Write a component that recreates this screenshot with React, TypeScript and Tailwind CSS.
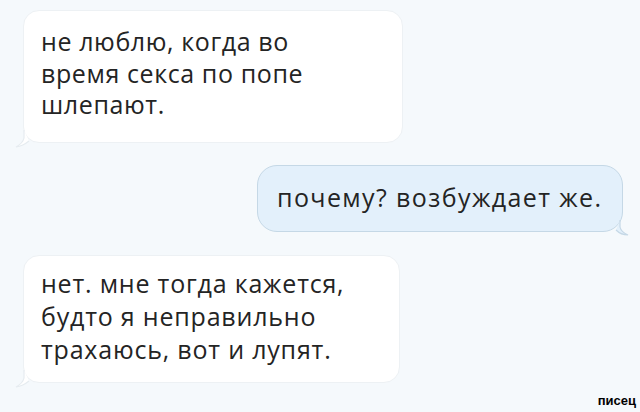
const incoming = [
  ["не люблю, когда во", "время секса по попе", "шлепают."],
  ["нет. мне тогда кажется,", "будто я неправильно", "трахаюсь, вот и лупят."],
];

const TailLeft = () => (
  <svg
    className="absolute -left-[9px] bottom-[-6px]"
    width="16"
    height="18"
    viewBox="0 0 16 18"
    fill="none"
  >
    <path d="M9 0 V8 Q8 13 1 17 Q8 16 14 11" stroke="#e6ecf0" strokeWidth="1.2" fill="#ffffff" />
  </svg>
);

const TailRight = () => (
  <svg
    className="absolute -right-[8px] bottom-[-5px]"
    width="16"
    height="16"
    viewBox="0 0 16 16"
    fill="none"
  >
    <path d="M6 0 V7 Q7 12 14 15 Q7 15 2 10" stroke="#c5d8e6" strokeWidth="1.2" fill="#e3f0fb" />
  </svg>
);

const App = () => {
  return (
    <div
      className="w-[640px] h-[412px] overflow-hidden bg-[#f5f9fc] text-[#242424] flex flex-col pt-[10px] pb-[4px] pr-[4px]"
      style={{ fontFamily: '"Open Sans", "Liberation Sans", sans-serif' }}
    >
      <div className="relative ml-[23px] w-[380px] h-[133px] rounded-[16px] bg-white border border-[#edf1f4] pl-[17px] pt-[15px]">
        {incoming[0].map((line) => (
          <div key={line} className="text-[25px] leading-[31.5px] font-medium tracking-[0.6px]">
            {line}
          </div>
        ))}
        <TailLeft />
      </div>

      <div className="relative mt-[22px] ml-[257px] w-[366px] h-[67px] rounded-[20px] bg-[#e3f0fb] border border-[#c5d8e6] pl-[19px] flex items-center">
        <div className="text-[25px] leading-[29px] pb-[2px] font-medium tracking-[1.4px]">почему? возбуждает же.</div>
        <TailRight />
      </div>

      <div className="relative mt-[23px] ml-[23px] w-[377px] h-[128px] rounded-[16px] bg-white border border-[#edf1f4] pl-[17px] pt-[11px]">
        {incoming[1].map((line) => (
          <div key={line} className="text-[25px] leading-[33px] font-medium tracking-[0.8px]">
            {line}
          </div>
        ))}
        <TailLeft />
      </div>

      <div className="flex-1 flex items-end justify-end">
        <div
          className="text-[13px] leading-[15px] font-bold text-black"
          style={{ fontFamily: '"Liberation Sans", Arial, sans-serif' }}
        >
          писец
        </div>
      </div>
    </div>
  );
};

export default App;
